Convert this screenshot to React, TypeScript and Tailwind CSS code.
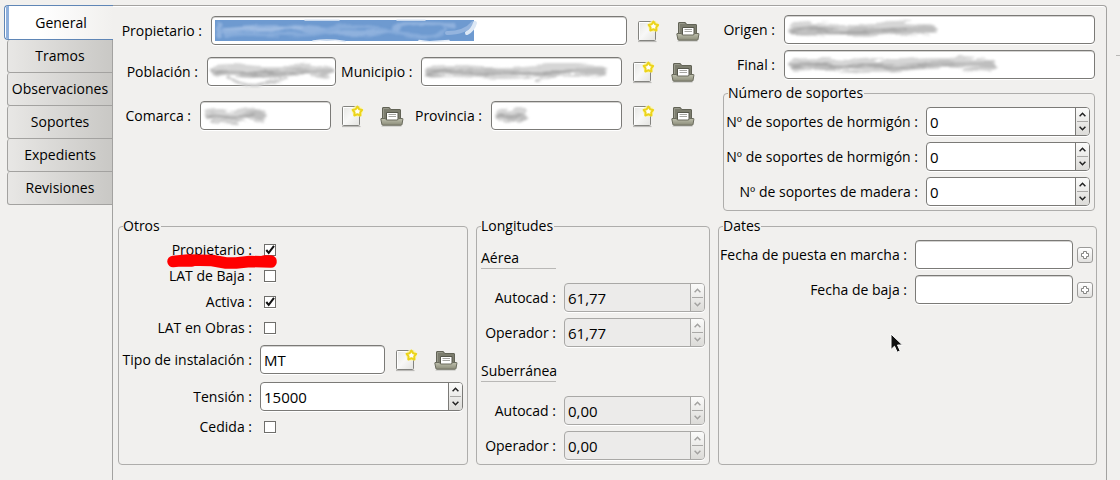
import React, { useId, useState } from "react";
import type { ReactNode } from "react";

const BOX =
  "flex h-[29px] min-w-0 rounded-[4px] border border-[#7b7a77] bg-white shadow-[0_1px_0_#ffffff,inset_0_1px_0_#d4d3d1]";
const FIELD = "w-full min-w-0 bg-transparent px-[3px] text-[15px] text-black outline-none";

function Label({ id, children, className = "" }: { id: string; children: ReactNode; className?: string }) {
  return (
    <label htmlFor={id} className={`flex shrink-0 justify-end whitespace-nowrap ${className}`}>
      {children} :
    </label>
  );
}

function TextBox({ id, value = "", className = "", children }: { id: string; value?: string; className?: string; children?: ReactNode }) {
  return (
    <div className={`relative ${BOX} ${className}`}>
      <input id={id} type="text" defaultValue={value} className={FIELD} />
      {children}
    </div>
  );
}

function SpinBox({ id, value, disabled = false }: { id: string; value: string; disabled?: boolean }) {
  const line = disabled ? "border-[#a9a8a6]" : "border-[#7b7a77]";
  const tone = disabled ? "text-[#a3a2a0]" : "text-[#222222]";
  return (
    <div
      className={`flex h-[29px] min-w-0 flex-1 overflow-hidden rounded-[4px] border shadow-[0_1px_0_#ffffff] ${line} ${
        disabled ? "bg-[#ecebea]" : "bg-white"
      }`}
    >
      <input id={id} type="text" inputMode="decimal" defaultValue={value} disabled={disabled} className={FIELD} />
      <div className={`flex w-[14px] shrink-0 flex-col border-l bg-linear-to-b from-[#fbfbfa] to-[#dcdbd8] ${line} ${tone}`}>
        <button type="button" disabled={disabled} aria-label="Aumentar" className="flex flex-1 items-center justify-center">
          <svg width="7" height="5" viewBox="0 0 7 5" fill="none" stroke="currentColor" strokeWidth="1.5">
            <path d="M.6 4.2 3.5 1.3 6.4 4.2" />
          </svg>
        </button>
        <div className="mx-px h-px bg-[#a9a8a6]" />
        <button type="button" disabled={disabled} aria-label="Reducir" className="flex flex-1 items-center justify-center">
          <svg width="7" height="5" viewBox="0 0 7 5" fill="none" stroke="currentColor" strokeWidth="1.5">
            <path d="M.6.8 3.5 3.7 6.4.8" />
          </svg>
        </button>
      </div>
    </div>
  );
}

function NewIcon() {
  const id = useId();
  return (
    <svg width="24" height="24" viewBox="0 0 24 24">
      <defs>
        <linearGradient id={id} x1="0" y1="0" x2="1" y2="1">
          <stop offset="0" stopColor="#e6e6e3" />
          <stop offset=".5" stopColor="#f8f8f7" />
          <stop offset="1" stopColor="#e3e3e0" />
        </linearGradient>
      </defs>
      <path d="M2 22.6h18.5" stroke="#b5b4b1" strokeWidth="1" />
      <rect x="2.5" y="2.5" width="17" height="19" rx="1" fill={`url(#${id})`} stroke="#83837f" />
      <path d="M3.5 20.5v-17h15" fill="none" stroke="#fff" />
      <circle cx="17.4" cy="7.2" r="5.6" fill="#fff7a8" opacity=".8" />
      <path
        d="m17.4 2.5 1.7 2.7 3.1.7-2 2.5.3 3.1-3.1-1.2-3.1 1.2.3-3.1-2-2.5 3.1-.7z"
        fill="#fffef6"
        stroke="#ecd41a"
        strokeWidth="2"
        strokeLinejoin="round"
      />
    </svg>
  );
}

function FolderIcon() {
  const id = useId();
  return (
    <svg width="24" height="24" viewBox="2 0 24 24">
      <defs>
        <linearGradient id={id} x1="0" y1="0" x2="0" y2="1">
          <stop offset="0" stopColor="#bfc0ad" />
          <stop offset="1" stopColor="#8b8c79" />
        </linearGradient>
      </defs>
      <path d="M3.5 22.2h20" stroke="#c9c8c5" />
      <path d="M4.5 17V4q0-.5.5-.5h6q.6 0 .9.6l.6 1.4h9.5q.5 0 .5.5v11z" fill="#7c7d6e" stroke="#626356" />
      <path d="M5.500 15V4.5h5.300" fill="none" stroke="#97988a" />
      <path d="M8.500 8.500h11.500v8H8.500z" fill="#fff" stroke="#56574b" />
      <path d="M10.500 10.500h7.500M10.500 12.500h7.500" stroke="#a6a6a2" />
      <path
        d="M3 14.500h4.500l1 1.500h11l1-1.500h4q.5 0 .4.600l-.9 5.300q-.2.800-1 .800H4.800q-.8 0-.9-.8L2.800 15z"
        fill={`url(#${id})`}
        stroke="#6a6b5d"
      />
    </svg>
  );
}

function LookupButtons() {
  return (
    <div className="ml-[9px] flex shrink-0 gap-4">
      <button type="button" aria-label="Nuevo" className="size-6">
        <NewIcon />
      </button>
      <button type="button" aria-label="Abrir" className="size-6">
        <FolderIcon />
      </button>
    </div>
  );
}

/* Brushed-over value: a wavy blurred streak, optionally with a loose tail */
function Smudge({ width, tail }: { width: number; tail?: string }) {
  const id = useId();
  const w = width;
  return (
    <svg
      aria-hidden="true"
      width={w}
      height="27"
      className="pointer-events-none absolute top-0 left-[2px] overflow-visible"
      fill="none"
      strokeLinecap="round"
    >
      <defs>
        <filter id={id} filterUnits="userSpaceOnUse" x="-8" y="-6" width={w + 16} height="44" colorInterpolationFilters="sRGB">
          <feTurbulence type="fractalNoise" baseFrequency=".03 .2" numOctaves="3" seed={w} result="n" />
          <feDisplacementMap in="SourceGraphic" in2="n" scale="9" xChannelSelector="R" yChannelSelector="G" />
          <feGaussianBlur stdDeviation="1.2" />
        </filter>
      </defs>
      <g filter={`url(#${id})`}>
        <path d={`M7 14C${w * 0.25} 10 ${w * 0.35} 18 ${w * 0.55} 14S${w * 0.85} 12 ${w - 6} 14`} stroke="#d6d6d6" strokeWidth="12" />
        <path d={`M5 15C${w * 0.2} 13 ${w * 0.4} 18 ${w * 0.6} 15S${w * 0.85} 13 ${w - 5} 14`} stroke="#bebebe" strokeWidth="6" />
        <path d={`M5 16Q${w * 0.15} 12 ${w * 0.3} 15T${w * 0.8} 13`} stroke="#aaaaaa" strokeWidth="2" />
        {tail && <path d={tail} stroke="#cfcfcf" strokeWidth="2.5" />}
      </g>
    </svg>
  );
}

function SelectedSmudge() {
  return (
    <svg
      aria-hidden="true"
      width="264"
      height="27"
      className="pointer-events-none absolute top-0 left-[3px] overflow-visible"
      fill="none"
      strokeLinecap="round"
    >
      <defs>
        <filter id="streak" x="-5%" y="-50%" width="110%" height="200%" colorInterpolationFilters="sRGB">
          <feTurbulence type="fractalNoise" baseFrequency=".03 .15" numOctaves="2" seed="4" result="n" />
          <feDisplacementMap in="SourceGraphic" in2="n" scale="8" />
          <feGaussianBlur stdDeviation="1.2" />
        </filter>
        <filter id="edge" x="-5%" y="-50%" width="110%" height="200%">
          <feGaussianBlur stdDeviation=".6" />
        </filter>
      </defs>
      <rect y="3" width="259" height="21" fill="#6e9ad0" />
      <g filter="url(#streak)">
        <path d="M4 7q-1 7 0 12M9 14q50-7 100 0t70-2 60-3" stroke="#8fb1dd" strokeWidth="5" />
        <path d="M10 18q30-3 60-1t50-5 60 3 50-3" stroke="#86abda" strokeWidth="4" />
        <path d="M8 12q40-2 80 0" stroke="#a5c0e4" strokeWidth="1.5" />
      </g>
      <g filter="url(#edge)">
        <path d="M232 16q18 0 26-10" stroke="#94b4de" strokeWidth="4" />
        <path d="M252 16q6-3 8-10" stroke="#dde8f5" strokeWidth="4" />
        <path d="M98 24q15-2 32 .5M204 23.500q8 1.500 14 1l16-1M90 3h34M182 3h28" stroke="#e3ebf6" strokeWidth="1.5" />
      </g>
    </svg>
  );
}

function CheckRow({ id, label, checked = false, children }: { id: string; label: string; checked?: boolean; children?: ReactNode }) {
  const [on, setOn] = useState(checked);
  return (
    <div className="relative flex h-[26px] items-center gap-3">
      <Label id={id} className="w-[129px]">
        {label}
      </Label>
      <span className="relative flex size-3">
        <input
          id={id}
          type="checkbox"
          checked={on}
          onChange={(e) => setOn(e.target.checked)}
          className="size-3 appearance-none border border-[#6f6e6b] bg-white shadow-[0_1px_0_#ffffff]"
        />
        {on && (
          <svg width="12" height="12" viewBox="0 0 12 12" className="pointer-events-none absolute inset-0" aria-hidden="true">
            <path d="M2.3 6 4.7 8.9 10 1.9" fill="none" stroke="#111" strokeWidth="2" />
          </svg>
        )}
      </span>
      {children}
    </div>
  );
}

function Group({ title, className = "", children }: { title: string; className?: string; children: ReactNode }) {
  return (
    <fieldset className={`min-w-0 rounded-[4px] border border-[#aeadab] px-1 pb-1 ${className}`}>
      <legend className="h-5 pr-px">{title}</legend>
      {children}
    </fieldset>
  );
}

function DateRow({ id, label }: { id: string; label: string }) {
  return (
    <div className="flex items-center">
      <Label id={id} className="w-[184px]">
        {label}
      </Label>
      <TextBox id={id} className="ml-2 flex-1" />
      <button
        type="button"
        aria-label="Elegir fecha"
        className="ml-1 flex size-4 shrink-0 items-center justify-center rounded-[3px] border border-[#9b9a98] bg-linear-to-b from-white to-[#e2e1df]"
      >
        <svg width="10" height="10" viewBox="0 0 10 10" fill="#fff" stroke="#858583">
          <path d="M3.5 1.5h3v2h2v3h-2v2h-3v-2h-2v-3h2z" />
        </svg>
      </button>
    </div>
  );
}

function LengthRows({ title, prefix, value, className = "" }: { title: string; prefix: string; value: string; className?: string }) {
  return (
    <section className={className}>
      <h2 className="h-[21px] w-[75px] border-b border-[#b9b8b6]">{title}</h2>
      <div className="mt-3.5 flex flex-col gap-1.5">
        {["Autocad", "Operador"].map((name) => (
          <div key={name} className="flex items-center gap-2">
            <Label id={`${prefix}-${name}`} className="w-[75px]">
              {name}
            </Label>
            <SpinBox id={`${prefix}-${name}`} value={value} disabled />
          </div>
        ))}
      </div>
    </section>
  );
}

const TABS = ["Tramos", "Observaciones", "Soportes", "Expedients", "Revisiones"];
const SUPPORTS = ["Nº de soportes de hormigón", "Nº de soportes de hormigón", "Nº de soportes de madera"];

export default function App() {
  return (
    <div className="flex min-h-screen bg-[#f1f0ee] pt-[5px] pl-1 font-['Open_Sans','Noto_Sans',sans-serif] text-[14px] leading-5 text-black">
      <nav className="flex w-[109px] shrink-0 flex-col" role="tablist" aria-orientation="vertical">
        <button
          type="button"
          role="tab"
          aria-selected="true"
          className="flex h-[35px] items-center justify-center overflow-hidden rounded-l-[4px] border-y border-l border-[#5f86b6] bg-linear-to-r from-white from-30% to-[#f1f0ee] pl-px"
        >
          <span className="h-full w-[3px] shrink-0 bg-[#8fb0dc]" />
          <span className="flex-1">General</span>
        </button>
        {TABS.map((tab) => (
          <button
            key={tab}
            type="button"
            role="tab"
            aria-selected="false"
            className="ml-[3px] flex h-[33px] items-center justify-center rounded-l-[3px] border-r border-b border-l border-[#a3a2a0] bg-linear-to-r from-[#e8e7e5] to-[#c9c8c5]"
          >
            {tab}
          </button>
        ))}
        <div className="flex-1 border-r border-[#a3a2a0]" />
      </nav>

      <main className="min-w-0 flex-1 rounded-tr-[4px] border-t border-r border-[#a3a2a0] pr-[9px] pl-[5px] shadow-[inset_0_1px_0_#ffffff]">
        <div className="grid grid-cols-[minmax(0,582fr)_minmax(0,372fr)] gap-[23px] pt-[9px] pr-0.5">
          <div>
            <div className="mt-px flex items-center">
              <Label id="propietario" className="w-[84px]">
                Propietario
              </Label>
              <TextBox id="propietario" className="ml-[9px] flex-1">
                <SelectedSmudge />
              </TextBox>
              <LookupButtons />
            </div>
            <div className="mt-3 flex items-center pr-[5px]">
              <Label id="poblacion" className="w-20">
                Población
              </Label>
              <TextBox id="poblacion" className="ml-[9px] flex-[129]">
                <Smudge width={123} tail="M18 20Q34 28 48 27T76 20" />
              </TextBox>
              <Label id="municipio" className="ml-2 w-[68px]">
                Municipio
              </Label>
              <TextBox id="municipio" className="ml-[9px] flex-[201]">
                <Smudge width={184} tail="M114 22l18-4" />
              </TextBox>
              <LookupButtons />
            </div>
            <div className="mt-[15px] flex items-center pr-[5px]">
              <Label id="comarca" className="w-[73px]">
                Comarca
              </Label>
              <TextBox id="comarca" className="ml-[9px] flex-1">
                <Smudge width={64} tail="M10 20l22 2" />
              </TextBox>
              <LookupButtons />
              <Label id="provincia" className="ml-[14px] w-16">
                Provincia
              </Label>
              <TextBox id="provincia" className="ml-[9px] flex-1">
                <Smudge width={33} />
              </TextBox>
              <LookupButtons />
            </div>
          </div>

          <div>
            <div className="flex items-center gap-[9px]">
              <Label id="origen" className="w-[52px]">
                Origen
              </Label>
              <TextBox id="origen" className="flex-1">
                <Smudge width={149} />
              </TextBox>
            </div>
            <div className="mt-1.5 flex items-center gap-[9px]">
              <Label id="final" className="w-[52px]">
                Final
              </Label>
              <TextBox id="final" className="flex-1">
                <Smudge width={209} />
              </TextBox>
            </div>
            <Group title="Número de soportes" className="mt-1">
              <div className="flex flex-col gap-1.5 pt-1">
                {SUPPORTS.map((name, i) => (
                  <div key={i} className="flex items-center gap-2">
                    <Label id={`soportes-${i}`} className="w-[190px]">
                      {name}
                    </Label>
                    <SpinBox id={`soportes-${i}`} value="0" />
                  </div>
                ))}
              </div>
            </Group>
          </div>
        </div>

        <div className="mt-[5px] grid grid-cols-[minmax(0,350fr)_minmax(0,234fr)_minmax(0,379fr)] gap-2">
          <Group title="Otros">
            <div className="pt-px">
              <CheckRow id="es-propietario" label="Propietario" checked>
                <svg
                  aria-hidden="true"
                  width="112"
                  height="16"
                  viewBox="0 0 112 16"
                  className="pointer-events-none absolute top-4 left-[43px]"
                >
                  <path
                    d="M7 8.5 22 7l24 .5 14 2.500h10L84 8.500l21 .5M12 8h14M98 8h7"
                    fill="none"
                    stroke="#ff0000"
                    strokeWidth="11.5"
                    strokeLinecap="round"
                    strokeLinejoin="round"
                  />
                </svg>
              </CheckRow>
              <CheckRow id="lat-baja" label="LAT de Baja" />
              <CheckRow id="activa" label="Activa" checked />
              <CheckRow id="lat-obras" label="LAT en Obras" />
              <div className="mt-1 flex items-center pr-[5px]">
                <Label id="tipo" className="w-[129px]">
                  Tipo de instalación
                </Label>
                <TextBox id="tipo" value="MT" className="ml-2 flex-1" />
                <LookupButtons />
              </div>
              <div className="mt-2 mb-[3px] flex items-center gap-2">
                <Label id="tension" className="w-[129px]">
                  Tensión
                </Label>
                <SpinBox id="tension" value="15000" />
              </div>
              <CheckRow id="cedida" label="Cedida" />
            </div>
          </Group>

          <Group title="Longitudes">
            <LengthRows title="Aérea" prefix="aerea" value="61,77" className="pt-3" />
            <LengthRows title="Suberránea" prefix="suberranea" value="0,00" className="pt-3.5" />
          </Group>

          <Group title="Dates" className="relative">
            <div className="-mr-px flex flex-col gap-1.5 pt-1">
              <DateRow id="puesta-en-marcha" label="Fecha de puesta en marcha" />
              <DateRow id="baja" label="Fecha de baja" />
            </div>
            <svg
              aria-hidden="true"
              width="14"
              height="21"
              viewBox="0 0 14 21"
              className="pointer-events-none absolute top-[97px] left-[171px]"
            >
              <path d="M1 1v15.5l3.5-3.3 2.7 6 3-1.3-2.7-5.9H12.5z" fill="#111" stroke="#fff" />
            </svg>
          </Group>
        </div>
      </main>
      <aside className="flex w-[13px] shrink-0 flex-col items-end pt-[50px]">
        <div className="h-px w-1 bg-[#b9b8b6]" />
      </aside>
    </div>
  );
}
